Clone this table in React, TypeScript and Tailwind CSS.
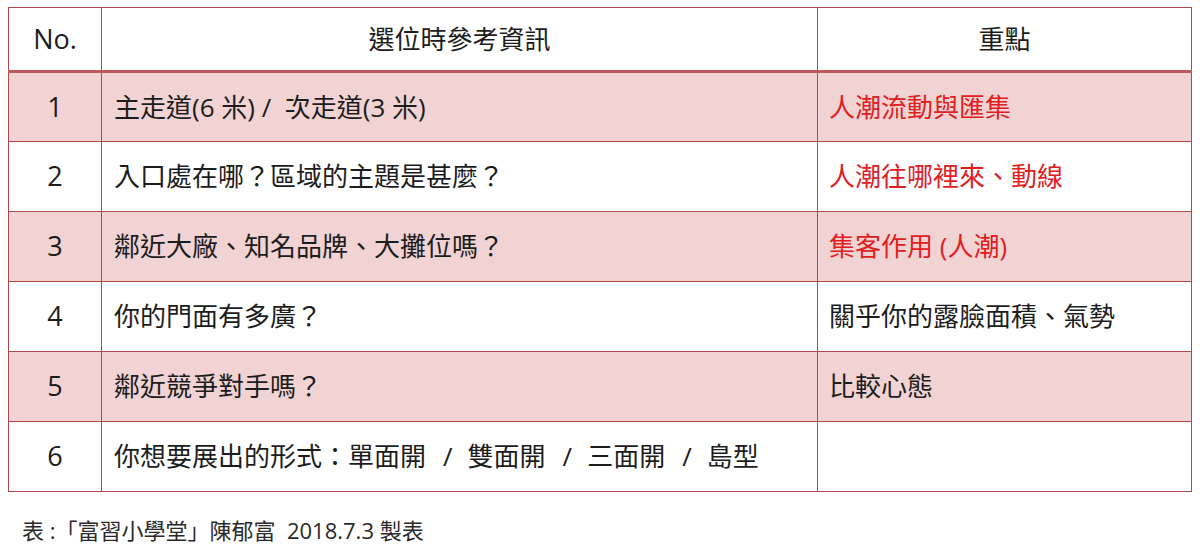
import React from 'react';

const Slash = () => <span className="inline-block ml-[17px] mr-[15px]">/</span>;

const rows: { no: string; info: React.ReactNode; point: string; red: boolean }[] = [
  { no: '1', info: '主走道(6 米) /  次走道(3 米)', point: '人潮流動與匯集', red: true },
  { no: '2', info: '入口處在哪？區域的主題是甚麼？', point: '人潮往哪裡來、動線', red: true },
  { no: '3', info: '鄰近大廠、知名品牌、大攤位嗎？', point: '集客作用 (人潮)', red: true },
  { no: '4', info: '你的門面有多廣？', point: '關乎你的露臉面積、氣勢', red: false },
  { no: '5', info: '鄰近競爭對手嗎？', point: '比較心態', red: false },
  {
    no: '6',
    info: (
      <>
        你想要展出的形式：單面開<Slash />雙面開<Slash />三面開<Slash />島型
      </>
    ),
    point: '',
    red: false,
  },
];

export default function App() {
  return (
    <div
      className="w-[1200px] h-[553px] bg-white text-[#1c1c1c]"
      style={{ fontFamily: '"Open Sans", "Noto Sans CJK TC", sans-serif' }}
    >
      <div className="pt-[7px] pl-[8px]">
        <table className="table-fixed border-collapse w-[1183px] text-[26px]">
          <colgroup>
            <col className="w-[93px]" />
            <col className="w-[716px]" />
            <col className="w-[374px]" />
          </colgroup>
          <thead>
            <tr className="h-[64px] border-b-[3px] border-b-[#c0595b]">
              <th className="border border-[#b2474c] font-normal text-center text-[27px]">No.</th>
              <th className="border border-[#b2474c] font-normal text-center">選位時參考資訊</th>
              <th className="border border-[#b2474c] font-normal text-center">重點</th>
            </tr>
          </thead>
          <tbody>
            {rows.map((r, i) => (
              <tr key={r.no} className={`h-[70px] ${i % 2 === 0 ? 'bg-[#f1d3d4]' : 'bg-white'}`}>
                <td className="border border-[#b2474c] text-center text-[27px]">{r.no}</td>
                <td className="border border-[#b2474c] pl-[12px] whitespace-pre">{r.info}</td>
                <td className={`border border-[#b2474c] pl-[11px] whitespace-pre ${r.red ? 'text-[#e0201f]' : ''}`}>
                  {r.point}
                </td>
              </tr>
            ))}
          </tbody>
        </table>
      </div>
      <div className="pl-[22px] pt-[22px] text-[22px] text-[#2a2a2a]">表 :「富習小學堂」陳郁富&nbsp;&nbsp;2018.7.3 製表</div>
    </div>
  );
}
